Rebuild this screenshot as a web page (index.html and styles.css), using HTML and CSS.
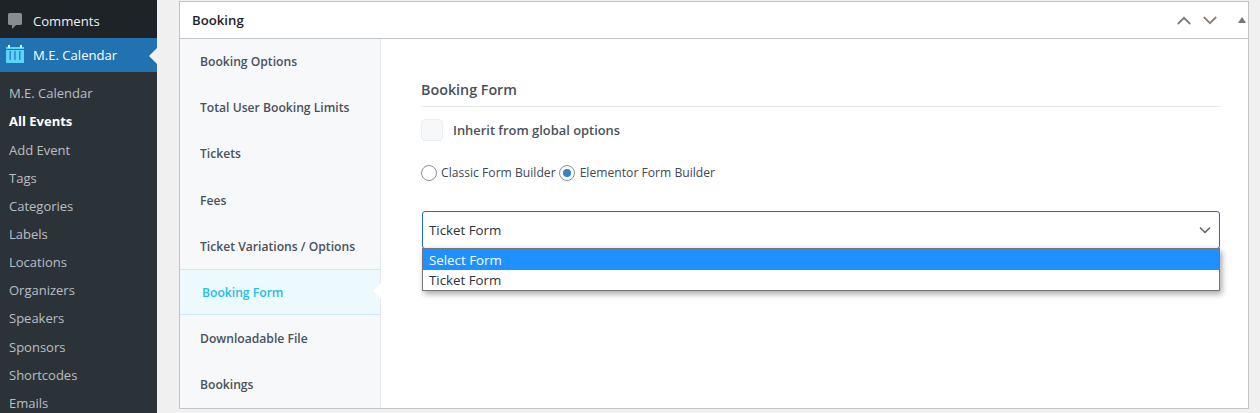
FILE: index.html
```html
<!DOCTYPE html>
<html lang="en">
<head>
<meta charset="utf-8">
<title>Booking</title>
<link rel="stylesheet" href="styles.css">
</head>
<body>
<div class="page">
  <aside class="adminmenu">
    <div class="top-item">
      <svg class="ico-comment" width="14" height="16" viewBox="0 0 14 16"><path fill="#8a8d90" d="M0 1.500A1.500 1.500 0 0 1 1.500 0h11A1.500 1.500 0 0 1 14 1.500v9a1.500 1.500 0 0 1-1.500 1.500H8l-4 4v-4H1.500A1.500 1.500 0 0 1 0 10.500z"/></svg>
      <span>Comments</span>
    </div>
    <div class="top-item current">
      <svg class="ico-cal" width="18" height="18" viewBox="0 0 18 18"><rect x="0" y="2" width="18" height="16" fill="#5cd4f6"/><rect x="2" y="0" width="2" height="3" fill="#fff"/><rect x="14" y="0" width="2" height="3" fill="#fff"/><rect x="0" y="4" width="18" height="1" fill="#2271b1"/><rect x="3.500" y="6" width="1.500" height="9" fill="#2f86c8"/><rect x="8.200" y="6" width="1.500" height="9" fill="#2f86c8"/><rect x="13" y="6" width="1.500" height="9" fill="#2f86c8"/></svg>
      <span>M.E. Calendar</span>
    </div>
    <nav class="submenu">
      <a>M.E. Calendar</a>
      <a class="on">All Events</a>
      <a>Add Event</a>
      <a>Tags</a>
      <a>Categories</a>
      <a>Labels</a>
      <a>Locations</a>
      <a>Organizers</a>
      <a>Speakers</a>
      <a>Sponsors</a>
      <a>Shortcodes</a>
      <a>Emails</a>
    </nav>
  </aside>
  <main class="content">
    <section class="postbox">
      <header class="postbox-head">
        <h2>Booking</h2>
        <div class="head-actions">
          <svg width="14" height="9" viewBox="0 0 14 9"><path d="M.8 8 7 1.800 13.200 8" fill="none" stroke="#787c82" stroke-width="1.800"/></svg>
          <svg width="14" height="9" viewBox="0 0 14 9"><path d="M.8 1 7 7.200 13.200 1" fill="none" stroke="#8c8272" stroke-width="1.800"/></svg>
          <svg class="tri" width="8" height="6" viewBox="0 0 8 6"><path d="M4 0l4 6H0z" fill="#72777c"/></svg>
        </div>
      </header>
      <div class="postbox-body">
        <ul class="tabs">
          <li>Booking Options</li>
          <li>Total User Booking Limits</li>
          <li>Tickets</li>
          <li>Fees</li>
          <li>Ticket Variations / Options</li>
          <li class="active">Booking Form</li>
          <li>Downloadable File</li>
          <li>Bookings</li>
        </ul>
        <div class="pane">
          <h4 class="pane-title">Booking Form</h4>
          <label class="inherit"><span class="checkbox"></span>Inherit from global options</label>
          <div class="radios">
            <span class="radio"></span><span class="radio-label">Classic Form Builder</span>
            <span class="radio checked"></span><span class="radio-label">Elementor Form Builder</span>
          </div>
          <div class="select-wrap">
            <div class="select">
              <span>Ticket Form</span>
              <svg width="12" height="8" viewBox="0 0 12 8"><path d="M1 1.500 6 6.500l5-5" fill="none" stroke="#5f6368" stroke-width="1.500"/></svg>
            </div>
            <ul class="options">
              <li class="hl">Select Form</li>
              <li>Ticket Form</li>
            </ul>
          </div>
        </div>
      </div>
    </section>
  </main>
</div>
</body>
</html>
```
FILE: styles.css
```css
* { box-sizing: border-box; }
html, body { margin: 0; padding: 0; height: 413px; overflow: hidden; }
body { background: #f0f0f1; font-family: "Open Sans", "Noto Sans", sans-serif; color: #3c434a; }
.page { display: flex; height: 413px; overflow: hidden; }

.adminmenu { width: 157px; flex: none; background: #1d2327; padding-top: 4px; }
.top-item { height: 34px; display: flex; align-items: center; color: #f0f0f1; font-size: 13.100px; position: relative; }
.top-item.current { background: #2271b1; color: #fff; }
.top-item.current::after { content: ""; position: absolute; right: 0; top: 10px; border: 8px solid transparent; border-right-color: #f0f0f1; border-left-width: 0; }
.ico-comment { margin: 0 11px 0 8px; }
.ico-cal { margin: -2px 9px 0 6px; }
.submenu { background: #2c3338; padding: 7.320px 0 0; height: 341px; }
.submenu a { display: block; height: 28.150px; line-height: 28px; padding-left: 9px; font-size: 13px; color: rgba(240,246,252,.72); }
.submenu a.on { color: #fff; font-weight: 700; }

.content { flex: 1; padding: 1px 11px 0 22px; min-width: 0; }
.postbox { background: #fff; border: 1px solid #c3c4c7; height: 408px; display: flex; flex-direction: column; }
.postbox-head { height: 37px; flex: none; border-bottom: 1px solid #c3c4c7; display: flex; align-items: center; justify-content: space-between; padding: 0 2px 0 12px; }
.postbox-head h2 { margin: 0; font-size: 13.200px; font-weight: 600; color: #1d2327; }
.head-actions { display: flex; align-items: center; gap: 12px; }
.tri { margin-left: 9px; margin-top: -1px; }
.postbox-body { flex: 1; display: flex; min-height: 0; }

.tabs { width: 201px; flex: none; margin: 0; padding: 0; list-style: none; background: #f7f8f9; border-right: 1px solid #e6e9eb; }
.tabs li { height: 46.200px; line-height: 45.500px; padding-left: 20px; font-size: 12.150px; font-weight: 600; color: #48525c; }
.tabs li.active { height: 46.500px; margin-top: -1px; line-height: 46px; background: #ecf9fd; border-top: 1px solid #cfeaf3; border-bottom: 1px solid #cfeaf3; padding-left: 22px; color: #25bdea; position: relative; }
.tabs li.active + li { margin-top: 0.500px; }
.tabs li.active::after { content: ""; position: absolute; right: -1px; top: 13px; border: 8px solid transparent; border-right-color: #fff; border-left-width: 0; }

.pane { flex: 1; padding: 41px 28px 0 40px; min-width: 0; }
.pane-title { margin: 0; height: 27px; font-size: 14.300px; font-weight: 600; color: #48525c; border-bottom: 1px solid #e6e9eb; line-height: 20px; }
.inherit { display: flex; align-items: center; margin-top: 12px; font-size: 12.900px; font-weight: 600; color: #48525c; }
.checkbox { width: 22px; height: 22px; background: #f7f8f9; border: 1px solid #eceef0; border-radius: 4px; margin-right: 10px; }
.radios { display: flex; align-items: center; margin-top: 23px; font-size: 12.150px; color: #3f4a55; }
.radio { width: 16px; height: 16px; border: 1px solid #8c8f94; border-radius: 50%; background: #fff; margin-right: 4px; flex: none; position: relative; }
.radio.checked { margin-right: 5px; }
.radio.checked::after { content: ""; position: absolute; left: 3px; top: 3px; width: 8px; height: 8px; border-radius: 50%; background: #3582c4; }
.radio-label { margin-right: 3px; }
.select-wrap { position: relative; margin: 30px 0 0 1px; }
.select { height: 38px; border: 1px solid #2271b1; border-radius: 3px; background: #fff; display: flex; align-items: center; justify-content: space-between; padding: 0 8px 0 6px; font-size: 13.300px; color: #2c3338; box-shadow: inset 0 0 4px rgba(0,0,0,.05); }
.options { position: absolute; left: 0; right: 0; top: 37px; margin: 0; padding: 0; list-style: none; background: #fff; border: 1px solid #767676; box-shadow: 2px 3px 6px rgba(0,0,0,.35); font-size: 13.300px; color: #2c3338; }
.options li { height: 20.500px; line-height: 20px; padding-left: 6px; }
.options li.hl { padding-top: 1px; background: #1e90ff; color: #fff; }
```
